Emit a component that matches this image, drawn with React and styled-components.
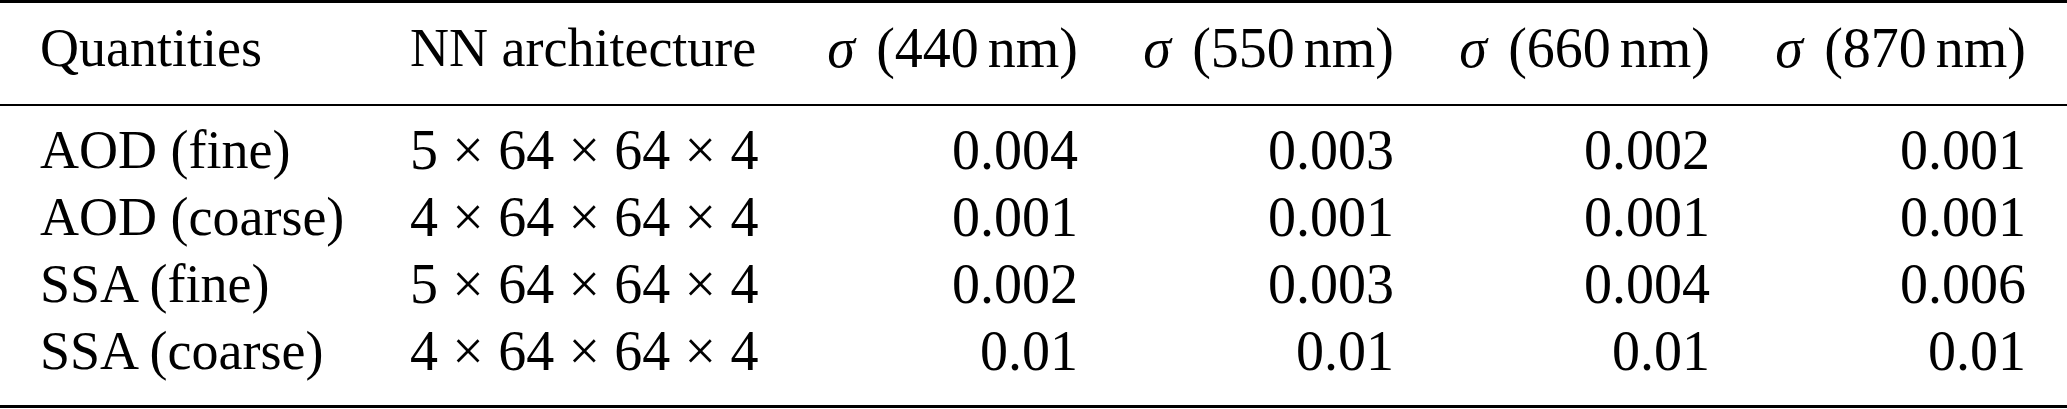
import React from 'react';
import styled, { createGlobalStyle } from 'styled-components';

const GlobalStyle = createGlobalStyle`
  html, body {
    margin: 0;
    padding: 0;
    background: #fff;
  }
`;

const columns = '370px 352px repeat(4, 316px)';

const wavelengths = ['440', '550', '660', '870'];

const rows = [
  ['AOD (fine)', [5, 64, 64, 4], '0.004', '0.003', '0.002', '0.001'],
  ['AOD (coarse)', [4, 64, 64, 4], '0.001', '0.001', '0.001', '0.001'],
  ['SSA (fine)', [5, 64, 64, 4], '0.002', '0.003', '0.004', '0.006'],
  ['SSA (coarse)', [4, 64, 64, 4], '0.01', '0.01', '0.01', '0.01'],
];

const Architecture = ({ layers }) => (
  <Cell $math>
    {layers.map((n, i) => (
      <React.Fragment key={i}>
        {i > 0 && <Times>×</Times>}
        {n}
      </React.Fragment>
    ))}
  </Cell>
);

const App = () => {
  return (
    <>
      <GlobalStyle />
      <TableWrap>
        <HeadRow>
          <Cell>Quantities</Cell>
          <Cell>NN architecture</Cell>
          {wavelengths.map((wl) => (
            <Cell key={wl} $right $math>
              <Sigma>σ</Sigma>({wl}
              <Unit>nm</Unit>)
            </Cell>
          ))}
        </HeadRow>
        <Body>
          {rows.map(([name, layers, ...values]) => (
            <Row key={name}>
              <Cell>{name}</Cell>
              <Architecture layers={layers} />
              {values.map((v, i) => (
                <Cell key={i} $right $math>
                  {v}
                </Cell>
              ))}
            </Row>
          ))}
        </Body>
      </TableWrap>
    </>
  );
};

const TableWrap = styled.div`
  width: 2067px;
  border-top: 3px solid #000;
  border-bottom: 3px solid #000;
  font-family: 'Liberation Serif', 'Times New Roman', serif;
  font-size: 54px;
  line-height: 67px;
  color: #000;
`;

const HeadRow = styled.div`
  display: grid;
  grid-template-columns: ${columns};
  padding: 12px 40px 22px;
  border-bottom: 2px solid #000;
`;

const Body = styled.div`
  padding: 11px 40px 20px;
`;

const Row = styled.div`
  display: grid;
  grid-template-columns: ${columns};
`;

const Cell = styled.div`
  white-space: nowrap;
  font-size: ${(p) => (p.$math ? '56px' : '54px')};
  text-align: ${(p) => (p.$right ? 'right' : 'left')};
`;

const Times = styled.span`
  margin: 0 0.255em;
`;

const Sigma = styled.i`
  font-style: italic;
  margin-right: 0.38em;
`;

const Unit = styled.span`
  margin-left: 0.16em;
`;

export default App;
